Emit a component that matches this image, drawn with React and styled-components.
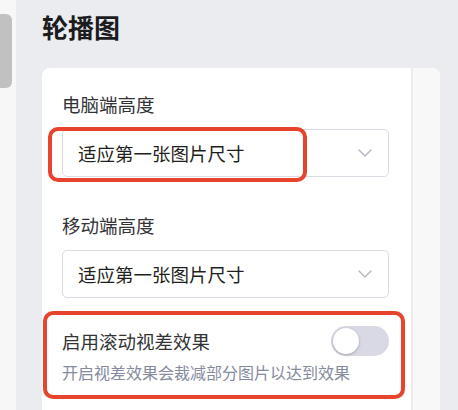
import React from 'react';
import styled, { createGlobalStyle } from 'styled-components';

const Global = createGlobalStyle`
  html, body {
    margin: 0;
    padding: 0;
    background: #ebecf0;
    font-family: "Noto Sans CJK SC", "Noto Sans", sans-serif;
  }
`;

function App() {
    return (
    <>
        <Global />
        <Page>
            <SideRail>
                <Thumb />
            </SideRail>
            <Main>
                <Title>轮播图</Title>
                <Card>
                    <Content>
                        <Field>
                            <Label>电脑端高度</Label>
                            <SelectBox>
                                <span>适应第一张图片尺寸</span>
                                <Chevron />
                                <Mark $left={-15} $top={-3} $width={259} $height={55} />
                            </SelectBox>
                        </Field>
                        <Field $gap={35}>
                            <Label>移动端高度</Label>
                            <SelectBox>
                                <span>适应第一张图片尺寸</span>
                                <Chevron />
                            </SelectBox>
                        </Field>
                        <SwitchField>
                            <SwitchRow>
                                <Label>启用滚动视差效果</Label>
                                <Toggle><Knob /></Toggle>
                            </SwitchRow>
                            <Hint>开启视差效果会裁减部分图片以达到效果</Hint>
                            <Mark $left={-19} $top={-15} $width={362} $height={88} />
                        </SwitchField>
                    </Content>
                    <ScrollTrack />
                </Card>
            </Main>
        </Page>
    </>
    );
}

function Chevron() {
    return (
        <svg width="14" height="8" viewBox="0 0 14 8" fill="none">
            <path d="M1 1l6 6 6-6" stroke="#b9bac6" strokeWidth="1.5" strokeLinecap="round" strokeLinejoin="round" />
        </svg>
    );
}

export default App

const Page = styled.div`
  display: flex;
  height: 410px;
  overflow: hidden;
  background: #ebecf0;
`

const SideRail = styled.div`
  width: 16px;
  flex-shrink: 0;
  background: #f7f7f7;
  padding-top: 14px;
  box-sizing: border-box;
`

const Thumb = styled.div`
  width: 12px;
  height: 74px;
  border-radius: 0 6px 6px 0;
  background: #c1c1c1;
`

const Main = styled.div`
  padding: 9px 0 0 26px;
  display: flex;
  flex-direction: column;
`

const Title = styled.h1`
  margin: 0;
  font-size: 26px;
  line-height: 36px;
  font-weight: 700;
  color: #1c1c1f;
`

const Card = styled.div`
  margin-top: 23px;
  width: 398px;
  flex: 1;
  display: flex;
  background: #fff;
  border-radius: 8px 8px 0 0;
  overflow: hidden;
`

const Content = styled.div`
  flex: 1;
  padding: 23px 22px 0 20px;
  display: flex;
  flex-direction: column;
`

const ScrollTrack = styled.div`
  width: 27px;
  border-left: 2px solid #ececec;
  background: #f8f8f8;
`

const Field = styled.div`
  display: flex;
  flex-direction: column;
  gap: 11px;
  margin-top: ${p => p.$gap || 0}px;
`

const Label = styled.div`
  font-size: 18.5px;
  line-height: 27px;
  color: #333336;
`

const SelectBox = styled.div`
  position: relative;
  height: 48px;
  box-sizing: border-box;
  border: 1px solid #dcdce4;
  border-radius: 5px;
  display: flex;
  align-items: center;
  justify-content: space-between;
  padding: 0 16px 0 15px;
  font-size: 18.5px;
  color: #1f1f21;
`

const Mark = styled.div`
  position: absolute;
  left: ${p => p.$left}px;
  top: ${p => p.$top}px;
  width: ${p => p.$width}px;
  height: ${p => p.$height}px;
  box-sizing: border-box;
  border: 4px solid #e8432c;
  border-radius: 10px;
  pointer-events: none;
`

const SwitchField = styled.div`
  position: relative;
  margin-top: 28px;
  display: flex;
  flex-direction: column;
  gap: 5px;
`

const SwitchRow = styled.div`
  display: flex;
  align-items: center;
  justify-content: space-between;
`

const Toggle = styled.div`
  width: 58px;
  height: 30px;
  border-radius: 15px;
  background: #d8d9e4;
  padding: 2px;
  box-sizing: border-box;
`

const Knob = styled.div`
  width: 26px;
  height: 26px;
  border-radius: 50%;
  background: #fff;
  box-shadow: 0 1px 3px rgba(0, 0, 0, 0.25);
`

const Hint = styled.div`
  font-size: 16px;
  line-height: 22px;
  color: #858a9e;
`
